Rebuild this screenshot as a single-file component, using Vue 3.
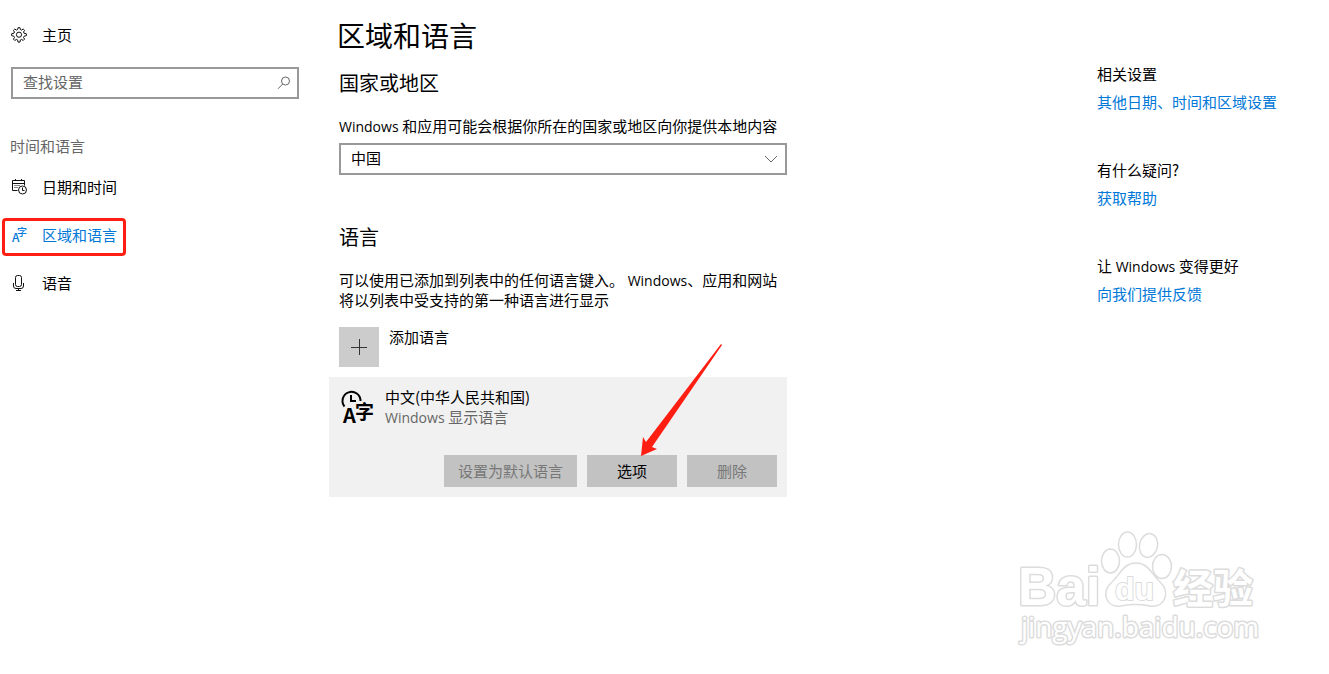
<script setup>
import { ref } from 'vue'

const query = ref('')
const region = ref('cn')

const related = [
  { title: '相关设置', link: '其他日期、时间和区域设置' },
  { title: '有什么疑问?', link: '获取帮助' },
  { before: '让', latin: ' Windows ', after: '变得更好', link: '向我们提供反馈' },
]
</script>

<template>
  <div class="settings">
    <nav class="sidebar">
      <a class="home" href="#">
        <svg class="icon" viewBox="0 0 18 18" width="18" height="18" fill="none" stroke="#111" aria-hidden="true">
          <path d="M7.6 3.600 8 1.700h2l.4 1.900 1.200.5 1.600-1.100 1.400 1.400-1.100 1.600.5 1.200 2.400.6v1.800l-2.400.7-.5 1.200 1.100 1.600-1.400 1.400-1.600-1.100-1.200.5-.4 2.200H8l-.4-2.200-1.200-.5-1.600 1.100-1.400-1.400 1.100-1.600L4 10.300 1.600 9.600V7.800L4 7.200l.5-1.200-1.100-1.600L4.800 3l1.600 1.100z" />
          <circle cx="9" cy="8.700" r="2.600" />
        </svg>
        <span>主页</span>
      </a>

      <div class="search">
        <input v-model="query" type="text" placeholder="查找设置" aria-label="查找设置" />
        <svg viewBox="0 0 14 14" width="14" height="14" fill="none" stroke="#666" aria-hidden="true">
          <circle cx="8.500" cy="5" r="4" />
          <path d="M5.700 8 1 12.800" />
        </svg>
      </div>

      <h2 class="group">时间和语言</h2>
      <ul class="items">
        <li>
          <a href="#">
            <svg class="icon" viewBox="0 0 18 18" width="18" height="18" fill="none" stroke="#111" aria-hidden="true">
              <path d="M7.500 12.500h-5v-10h12v5M2.500 5.500h12M5.500 1v2M11.500 1v2" />
              <path d="M4.500 7.500h6M4.500 9.500h4" stroke-dasharray="1 1" />
              <circle cx="12.500" cy="12" r="4" />
              <path d="M12.500 9.500v3h2" />
            </svg>
            <span>日期和时间</span>
          </a>
        </li>
        <li class="active">
          <a href="#" aria-current="page">
            <svg class="icon" viewBox="0 0 18 18" width="18" height="18" fill="#0078d7" aria-hidden="true">
              <text class="glyph" x="2" y="16" font-size="12">A</text>
              <text class="glyph" x="7" y="10" font-size="10">字</text>
            </svg>
            <span>区域和语言</span>
          </a>
        </li>
        <li>
          <a href="#">
            <svg class="icon" viewBox="0 0 18 18" width="18" height="18" fill="none" stroke="#111" aria-hidden="true">
              <rect x="5.500" y="1.500" width="6" height="11" rx="2" />
              <path d="M3.500 9v3q0 2.500 2.500 2.500h5q2.500 0 2.500-2.500V9M8.500 14.500v2M6 16.500h5" />
            </svg>
            <span>语音</span>
          </a>
        </li>
      </ul>
    </nav>

    <main class="content">
      <h1>区域和语言</h1>

      <section class="country">
        <h2>国家或地区</h2>
        <label for="region"><span class="latin">Windows </span>和应用可能会根据你所在的国家或地区向你提供本地内容</label>
        <div class="select">
          <select id="region" v-model="region">
            <option value="cn">中国</option>
          </select>
          <svg viewBox="0 0 14 8" width="14" height="8" fill="none" stroke="#666" aria-hidden="true">
            <path d="M1 1l6 6 6-6" />
          </svg>
        </div>
      </section>

      <section class="language">
        <h2>语言</h2>
        <p>可以使用已添加到列表中的任何语言键入。<span class="latin"> Windows</span>、应用和网站将以列表中受支持的第一种语言进行显示</p>
        <button class="add" type="button">
          <span class="plus">
            <svg viewBox="0 0 16 16" width="16" height="16" fill="none" stroke="#333" aria-hidden="true">
              <path d="M8.500 0v16M0 8.500h16" />
            </svg>
          </span>
          <span>添加语言</span>
        </button>
      </section>

      <article class="card">
        <div class="card-head">
          <svg viewBox="0 0 36 40" width="36" height="40" aria-hidden="true">
            <path d="M5.500 19.500A9 9 0 1 1 21.500 14" fill="none" stroke="#000" stroke-width="2" />
            <path d="M12 8v6h5" fill="none" stroke="#000" stroke-width="2" />
            <text class="glyph semi" x="4" y="36" font-size="20">A</text>
            <text class="glyph semi" x="16" y="32" font-size="19">字</text>
          </svg>
          <div>
            <h3>中文(中华人民共和国)</h3>
            <p><span class="latin">Windows </span>显示语言</p>
          </div>
        </div>
        <div class="actions">
          <button class="wide" type="button" disabled>设置为默认语言</button>
          <button type="button">选项</button>
          <button type="button" disabled>删除</button>
        </div>
        <svg class="arrow" viewBox="0 0 84 114" width="84" height="114" fill="#ff1e12" aria-hidden="true">
          <path d="M82 2 83 3 13 105 18 107 2 114 4 95 7 100Z" />
        </svg>
      </article>
    </main>

    <aside class="related">
      <section v-for="item in related" :key="item.link">
        <h2>{{ item.title }}{{ item.before }}<span v-if="item.latin" class="latin">{{ item.latin }}</span>{{ item.after }}</h2>
        <a href="#">{{ item.link }}</a>
      </section>
    </aside>

    <svg class="watermark" viewBox="0 0 255 125" width="255" height="125" role="img" aria-label="Baidu 经验">
      <g fill="#fff" stroke="#dcdcdc" stroke-width="1.500">
        <ellipse cx="100.500" cy="36" rx="9" ry="12" />
        <ellipse cx="117.500" cy="19.500" rx="9" ry="12.500" />
        <ellipse cx="138.500" cy="20.500" rx="9" ry="12" transform="rotate(12 138.500 20.500)" />
        <ellipse cx="152" cy="41.500" rx="9.500" ry="12" />
        <path d="M126 38C139 38 142 50 150 57C161 67 155 83 140 81C130 79 121 79 111 81C95 83 91 66 102 57C110 50 113 38 126 38Z" />
      </g>
      <g class="mark">
        <text class="brand" x="8" y="80" font-size="53">Bai</text>
        <text class="brand du" x="105" y="75" font-size="32">du</text>
        <text class="cjk" x="163" y="78" font-size="40">经验</text>
        <text class="site" x="11" y="112" font-size="28">jingyan.baidu.com</text>
      </g>
    </svg>
  </div>
</template>

<style>
body {
  margin: 0;
  background: #fff;
}
</style>

<style scoped>
.settings {
  position: relative;
  box-sizing: border-box;
  min-height: 100vh;
  display: grid;
  grid-template-columns: 329px minmax(0, 458px) 310px minmax(0, 1fr);
  font-family: "Noto Sans CJK SC", sans-serif;
  font-size: 15px;
  line-height: 20px;
  color: #000;
}

h1,
h2,
h3,
p,
ul {
  margin: 0;
  padding: 0;
  font-weight: 400;
  font-size: 15px;
}

a {
  text-decoration: none;
  color: #0078d7;
}

button,
input,
select {
  font: inherit;
  color: #000;
  box-sizing: border-box;
  border-radius: 0;
}

.latin {
  font-family: "Open Sans", sans-serif;
  font-size: 14px;
  line-height: 14px;
  white-space: pre-wrap;
}

.sidebar {
  padding: 25px 30px 0 10px;
}

.home,
.items a {
  display: flex;
  align-items: center;
  gap: 14px;
  color: #000;
}

.icon {
  flex: none;
}

.search {
  display: flex;
  align-items: center;
  height: 32px;
  box-sizing: border-box;
  margin: 22px 0 0 1px;
  padding: 0 6px 0 10px;
  border: 2px solid #999;
}

.search input {
  flex: 1;
  min-width: 0;
  padding: 0 0 2px;
  border: 0;
  outline: 0;
  background: transparent;
}

.search input::placeholder {
  color: #666;
  opacity: 1;
}

.group {
  margin-top: 37px;
  color: #666;
}

.items {
  margin-top: 7px;
  list-style: none;
}

.items li {
  position: relative;
}

.items a {
  height: 48px;
}

.items .active a {
  color: #0078d7;
}

.active::after {
  content: "";
  position: absolute;
  left: -8px;
  top: 7px;
  width: 118px;
  height: 32px;
  border: 3px solid #ff1e12;
  border-radius: 4px;
}

.glyph {
  font-family: "Noto Sans CJK SC", sans-serif;
  font-weight: 500;
}

.semi {
  font-weight: 600;
}

.content {
  padding-top: 16px;
}

.content h1 {
  padding-left: 8px;
  font-size: 28px;
  line-height: 38px;
}

.content h2 {
  font-size: 20px;
  line-height: 28px;
}

.country,
.language {
  padding-left: 10px;
}

.country {
  margin-top: 15px;
}

.country label {
  display: block;
  margin: 19px 0 7px;
}

.select {
  position: relative;
}

.select select {
  display: block;
  width: 100%;
  height: 32px;
  padding: 0 10px 2px;
  border: 2px solid #999;
  background: #fff;
  appearance: none;
}

.select svg {
  position: absolute;
  right: 9px;
  top: 12px;
  pointer-events: none;
}

.language {
  margin-top: 48px;
}

.language p {
  margin-top: 19px;
}

.add {
  display: flex;
  gap: 10px;
  margin-top: 17px;
  padding: 0;
  border: 0;
  background: transparent;
}

.plus {
  display: grid;
  place-items: center;
  width: 40px;
  height: 40px;
  background: #ccc;
}

.card {
  position: relative;
  margin-top: 10px;
  padding: 10px;
  background: #f1f1f1;
}

.card-head {
  display: flex;
  gap: 10px;
  height: 40px;
}

.card-head p {
  color: #666;
}

.actions {
  display: flex;
  justify-content: flex-end;
  gap: 10px;
  margin-top: 28px;
}

.actions button {
  width: 90px;
  height: 32px;
  padding: 0;
  border: 0;
  background: #c2c2c2;
}

.actions .wide {
  width: 133px;
}

.actions button:disabled {
  color: #777;
}

.arrow {
  position: absolute;
  right: 64px;
  bottom: 41px;
  pointer-events: none;
}

.related {
  grid-column: 4;
  padding-top: 64px;
}

.related section {
  margin-bottom: 48px;
}

.related a {
  display: block;
  margin-top: 8px;
}

.watermark {
  position: absolute;
  right: 64px;
  bottom: 24px;
  pointer-events: none;
}

.mark text {
  fill: #fff;
  stroke: #dcdcdc;
  stroke-width: 3px;
  stroke-linejoin: round;
  paint-order: stroke;
}

.mark .brand {
  font-family: "Liberation Sans", Arial, sans-serif;
  font-weight: 700;
}

.mark .du {
  stroke-width: 2px;
}

.mark .cjk {
  font-family: "Noto Sans CJK SC", sans-serif;
  font-weight: 700;
}

.mark .site {
  font-family: "Open Sans", sans-serif;
}
</style>
